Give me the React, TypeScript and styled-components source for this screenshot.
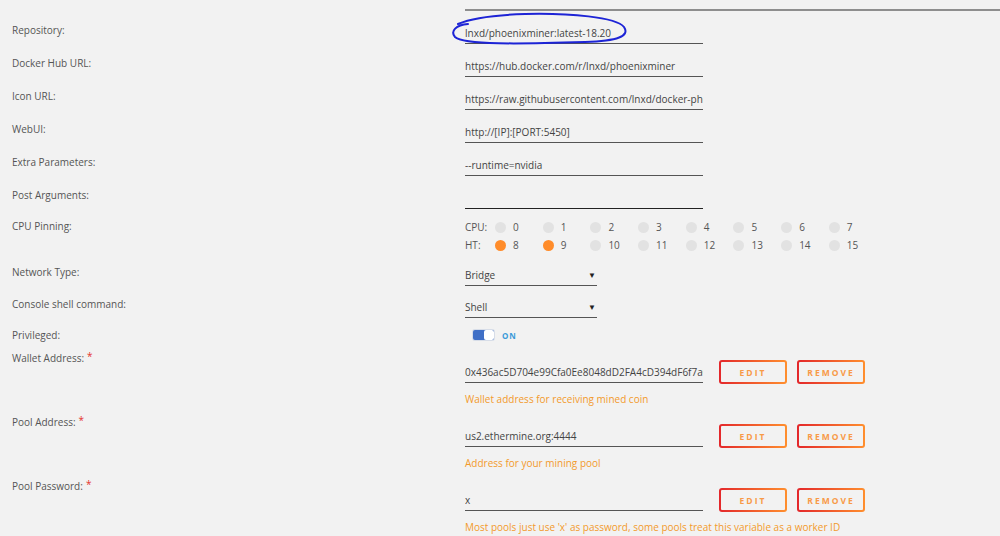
import React from "react";
import styled, { createGlobalStyle } from "styled-components";

const Global = createGlobalStyle`
  html, body { margin: 0; padding: 0; background: #f2f2f2; }
  body { font-family: "Open Sans", "Noto Sans", sans-serif; }
`;

const Page = styled.div`
  position: relative;
  width: 1000px;
  height: 536px;
  overflow: hidden;
  background: #f2f2f2;
  padding-left: 12px;
  box-sizing: border-box;
  display: flex;
  flex-direction: column;
`;

const Row = styled.div<{ $mt: number }>`
  display: grid;
  grid-template-columns: 453px 1fr;
  margin-top: ${(p) => p.$mt}px;
`;

const TopLine = styled.div`
  grid-column: 2;
  height: 9px;
  border-bottom: 2px solid #8e8e8e;
  margin-right: -20px;
`;

const Label = styled.div`
  font-size: 10px;
  line-height: 16px;
  color: #555;
  white-space: nowrap;
`;

const Req = styled.span`
  color: #e5322d;
  font-size: 10px;
  margin-left: 3px;
  position: relative;
  top: -2px;
`;

const TextInput = styled.div<{ $dark?: boolean }>`
  width: 238px;
  height: 22px;
  flex-shrink: 0;
  box-sizing: border-box;
  border-bottom: 1px solid ${(p) => (p.$dark ? "#222" : "#555")};
  font-size: 10px;
  line-height: 22px;
  color: #444;
  white-space: nowrap;
  overflow: hidden;
`;

const Select = styled.div`
  width: 132px;
  height: 22px;
  box-sizing: border-box;
  border-bottom: 1px solid #555;
  font-size: 10px;
  line-height: 22px;
  color: #444;
  display: flex;
  justify-content: space-between;
  align-items: center;
`;

const Arrow = styled.span`
  font-size: 8px;
  color: #222;
  margin-right: 1px;
`;

const PinGrid = styled.div`
  display: flex;
  flex-direction: column;
`;

const PinRow = styled.div`
  display: grid;
  grid-template-columns: 30px repeat(8, 47.7px);
  height: 18px;
  align-items: center;
  font-size: 10px;
  color: #555;
`;

const PinCell = styled.div`
  display: flex;
  align-items: center;
  gap: 7px;
`;

const Dot = styled.span<{ $on?: boolean }>`
  width: 11px;
  height: 11px;
  border-radius: 50%;
  background: ${(p) => (p.$on ? "#ff8c2a" : "#e2e2e2")};
`;

const ToggleWrap = styled.div`
  display: flex;
  align-items: center;
  height: 16px;
  padding-left: 8px;
  gap: 8px;
`;

const Toggle = styled.span`
  display: flex;
  width: 21px;
  height: 10px;
  border-radius: 2px;
  overflow: hidden;
  background: #3f6fc6;
  box-shadow: 0 0 0 1px #d7dde8;
`;

const Knob = styled.span`
  margin-left: auto;
  width: 10px;
  height: 10px;
  border-radius: 2px;
  background: #fff;
`;

const OnText = styled.span`
  font-size: 8px;
  font-weight: 700;
  letter-spacing: 1px;
  color: #3a9ad9;
`;

const ConfigField = styled.div`
  padding-top: 11px;
  display: flex;
  flex-direction: column;
`;

const ConfigLine = styled.div`
  display: flex;
  align-items: center;
  height: 22px;
  gap: 16px;
`;

const Buttons = styled.div`
  display: flex;
  gap: 10px;
`;

const GradButton = styled.button`
  width: 68px;
  height: 24px;
  padding: 0;
  border: 2px solid transparent;
  border-radius: 3px;
  background: linear-gradient(#f2f2f2, #f2f2f2) padding-box,
    linear-gradient(90deg, #e3272b 0%, #ff8f2e 100%) border-box;
  color: #f89a48;
  font-family: "Open Sans", "Noto Sans", sans-serif;
  font-weight: 700;
  font-size: 8.5px;
  letter-spacing: 2px;
  cursor: pointer;
`;

const Helper = styled.div`
  margin-top: 9px;
  font-size: 10px;
  line-height: 14px;
  color: #f29a2c;
  white-space: nowrap;
`;

const Scribble = styled.svg`
  position: absolute;
  left: 0;
  top: 0;
  pointer-events: none;
`;

const inputs: { label: string; value: string; dark?: boolean }[] = [
  { label: "Repository:", value: "lnxd/phoenixminer:latest-18.20" },
  { label: "Docker Hub URL:", value: "https://hub.docker.com/r/lnxd/phoenixminer" },
  { label: "Icon URL:", value: "https://raw.githubusercontent.com/lnxd/docker-phoenixminer/master/icon.png" },
  { label: "WebUI:", value: "http://[IP]:[PORT:5450]" },
  { label: "Extra Parameters:", value: "--runtime=nvidia" },
  { label: "Post Arguments:", value: "", dark: true },
];

const configs = [
  {
    label: "Wallet Address:",
    value: "0x436ac5D704e99Cfa0Ee8048dD2FA4cD394dF6f7a0",
    help: "Wallet address for receiving mined coin",
    mt: 7,
  },
  {
    label: "Pool Address:",
    value: "us2.ethermine.org:4444",
    help: "Address for your mining pool",
    mt: 8,
  },
  {
    label: "Pool Password:",
    value: "x",
    help: "Most pools just use 'x' as password, some pools treat this variable as a worker ID",
    mt: 8,
  },
];

const cpu = [0, 1, 2, 3, 4, 5, 6, 7];
const ht = [8, 9, 10, 11, 12, 13, 14, 15];
const pinned = new Set([8, 9]);

export default function App() {
  return (
    <>
      <Global />
      <Page>
        <Row $mt={0}>
          <TopLine />
        </Row>
        {inputs.map((r) => (
          <Row key={r.label} $mt={11}>
            <Label>{r.label}</Label>
            <TextInput $dark={r.dark}>{r.value}</TextInput>
          </Row>
        ))}
        <Row $mt={9}>
          <Label>CPU Pinning:</Label>
          <PinGrid>
            <PinRow>
              <span>CPU:</span>
              {cpu.map((n) => (
                <PinCell key={n}>
                  <Dot $on={pinned.has(n)} />
                  {n}
                </PinCell>
              ))}
            </PinRow>
            <PinRow>
              <span>HT:</span>
              {ht.map((n) => (
                <PinCell key={n}>
                  <Dot $on={pinned.has(n)} />
                  {n}
                </PinCell>
              ))}
            </PinRow>
          </PinGrid>
        </Row>
        <Row $mt={10}>
          <Label>Network Type:</Label>
          <Select>
            Bridge<Arrow>▼</Arrow>
          </Select>
        </Row>
        <Row $mt={10}>
          <Label>Console shell command:</Label>
          <Select>
            Shell<Arrow>▼</Arrow>
          </Select>
        </Row>
        <Row $mt={9}>
          <Label>Privileged:</Label>
          <ToggleWrap>
            <Toggle>
              <Knob />
            </Toggle>
            <OnText>ON</OnText>
          </ToggleWrap>
        </Row>
        {configs.map((c) => (
          <Row key={c.label} $mt={c.mt}>
            <Label>
              {c.label}
              <Req>*</Req>
            </Label>
            <ConfigField>
              <ConfigLine>
                <TextInput>{c.value}</TextInput>
                <Buttons>
                  <GradButton>EDIT</GradButton>
                  <GradButton>REMOVE</GradButton>
                </Buttons>
              </ConfigLine>
              <Helper>{c.help}</Helper>
            </ConfigField>
          </Row>
        ))}
        <Scribble width="1000" height="536" viewBox="0 0 1000 536">
          <path
            d="M468 24 C 456 25, 450 31, 455 37 C 463 45, 520 44, 585 42 C 618 41, 630 36, 624 27 C 616 17, 570 13, 525 14 C 495 15, 472 18, 458 24"
            fill="none"
            stroke="#1d24d6"
            strokeWidth="2"
            strokeLinecap="round"
          />
        </Scribble>
      </Page>
    </>
  );
}
